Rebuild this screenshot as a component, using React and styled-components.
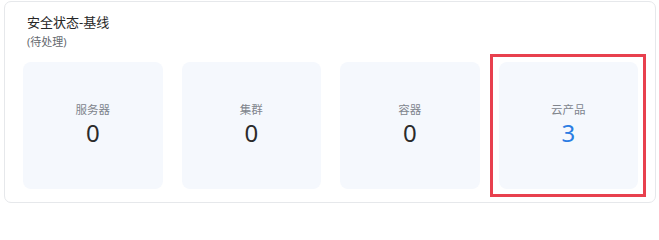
import styled, { createGlobalStyle } from "styled-components";

const GlobalStyle = createGlobalStyle`
  html, body {
    margin: 0;
    padding: 0;
    background: #ffffff;
  }
  body {
    font-family: "Noto Sans", "Noto Sans CJK SC", sans-serif;
    color: #333333;
  }
`;

const Page = styled.div`
  width: 659px;
  height: 204px;
  box-sizing: border-box;
  padding: 1px 3px 1px 4px;
`;

const Card = styled.div`
  height: 100%;
  box-sizing: border-box;
  border: 1px solid #e6e8eb;
  border-radius: 7px;
  padding: 10px 17px 13px 18px;
  display: flex;
  flex-direction: column;
`;

const Header = styled.div`
  padding-left: 4px;
  margin-bottom: 12px;
`;

const Title = styled.div`
  font-size: 13px;
  line-height: 20px;
  color: #262626;
`;

const Sub = styled.div`
  margin-top: 2px;
  font-size: 11px;
  line-height: 16px;
  color: #666a70;
`;

const Grid = styled.div`
  flex: 1;
  display: grid;
  grid-template-columns: repeat(4, 1fr);
  gap: 19px;
`;

const Tile = styled.div`
  position: relative;
  background: #f5f8fd;
  border-radius: 8px;
  display: flex;
  flex-direction: column;
  align-items: center;
  justify-content: center;
  padding-bottom: 1px;
`;

const Label = styled.div`
  font-size: 11.5px;
  line-height: 16px;
  color: #80858d;
`;

const Value = styled.div`
  font-size: 24px;
  line-height: 30px;
  color: ${(props) => (props.active ? "#2b7de3" : "#2b2b2b")};
`;

const Highlight = styled.div`
  position: absolute;
  inset: -8px -8px -8px -9px;
  border: 3px solid #e8404e;
  pointer-events: none;
`;

const items = [
  { label: "服务器", value: 0 },
  { label: "集群", value: 0 },
  { label: "容器", value: 0 },
  { label: "云产品", value: 3, marked: true },
];

const App = () => {
  return (
    <Page>
      <GlobalStyle />
      <Card>
        <Header>
          <Title>安全状态-基线</Title>
          <Sub>(待处理)</Sub>
        </Header>
        <Grid>
          {items.map((item, index) => (
            <Tile key={index}>
              <Label>{item.label}</Label>
              <Value active={item.value > 0}>{item.value}</Value>
              {item.marked && <Highlight />}
            </Tile>
          ))}
        </Grid>
      </Card>
    </Page>
  );
};

export default App;
